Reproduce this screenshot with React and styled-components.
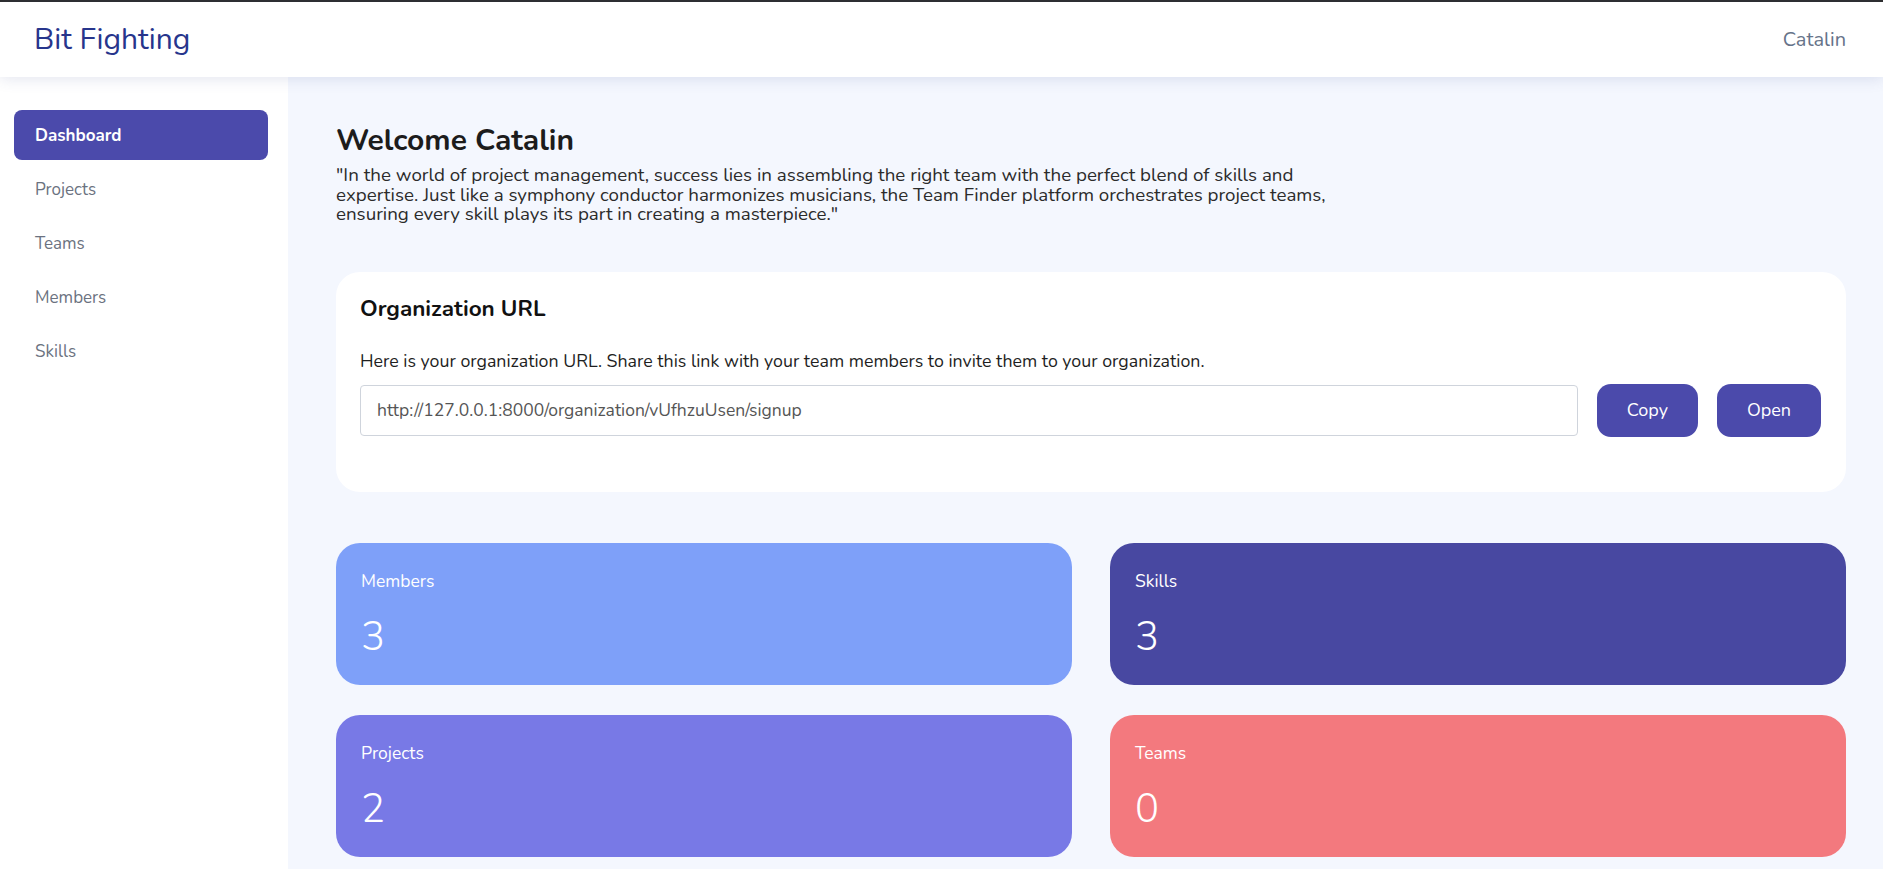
import React from "react";
import styled, { createGlobalStyle } from "styled-components";

const GlobalStyle = createGlobalStyle`
  html, body {
    margin: 0;
    padding: 0;
    background-color: #f4f7fe;
    font-family: "Nunito", "Lato", "Open Sans", sans-serif;
  }
  * {
    box-sizing: border-box;
  }
`;

const Page = styled.div`
  min-height: 869px;
  display: flex;
  flex-direction: column;
  border-top: 2px solid #2e2e2e;
`;

const TopBar = styled.header`
  height: 75px;
  display: flex;
  align-items: center;
  justify-content: space-between;
  padding: 0 37px 0 34px;
  background-color: #fff;
  box-shadow: 0 2px 14px rgba(60, 70, 140, 0.14);
  position: relative;
  z-index: 1;
`;

const Brand = styled.div`
  font-size: 30px;
  color: #27358c;
  font-weight: 400;
`;

const UserName = styled.div`
  font-size: 20px;
  color: #667389;
`;

const Body = styled.div`
  flex: 1;
  display: flex;
`;

const Sidebar = styled.nav`
  width: 288px;
  flex-shrink: 0;
  background-color: #fff;
  padding: 33px 20px 0 14px;
  display: flex;
  flex-direction: column;
  gap: 4px;
`;

const NavItem = styled.div`
  height: 50px;
  display: flex;
  align-items: center;
  padding-left: 21px;
  border-radius: 8px;
  font-size: 17px;
  font-weight: ${(p) => (p.active ? 700 : 400)};
  color: ${(p) => (p.active ? "#fff" : "#6b7280")};
  background-color: ${(p) => (p.active ? "#4b4aab" : "transparent")};
`;

const Main = styled.main`
  flex: 1;
  padding: 46px 37px 14px 48px;
`;

const Title = styled.h1`
  margin: 0 0 7px;
  font-size: 30px;
  line-height: 36px;
  font-weight: 700;
  color: #1c1c1c;
`;

const Quote = styled.p`
  margin: 0;
  max-width: 1010px;
  font-size: 18.75px;
  line-height: 19.6px;
  color: #2b2b2b;
`;

const UrlCard = styled.section`
  margin-top: 47px;
  background-color: #fff;
  border-radius: 24px;
  padding: 23px 25px 55px 24px;
`;

const CardTitle = styled.h2`
  margin: 0;
  font-size: 22.5px;
  line-height: 27px;
  font-weight: 700;
  color: #111;
`;

const CardText = styled.p`
  margin: 27px 0 11px;
  font-size: 17.8px;
  line-height: 24px;
  color: #1f1f1f;
`;

const UrlRow = styled.div`
  display: flex;
  align-items: center;
  gap: 19px;
`;

const UrlInput = styled.input`
  flex: 1;
  height: 51px;
  border: 1px solid #cfd4dc;
  border-radius: 4px;
  padding: 0 16px;
  font-family: inherit;
  font-size: 17.5px;
  color: #555;
  background-color: #fff;
  outline: none;
`;

const ActionButton = styled.button`
  height: 53px;
  padding: 0 30px;
  border: none;
  border-radius: 14px;
  background-color: #4b4aab;
  color: #fff;
  font-family: inherit;
  font-size: 18px;
  cursor: pointer;
`;

const StatsGrid = styled.div`
  margin-top: 51px;
  display: grid;
  grid-template-columns: 1fr 1fr;
  column-gap: 38px;
  row-gap: 30px;
`;

const StatCard = styled.div`
  height: 142px;
  border-radius: 24px;
  padding: 26px 25px;
  background-color: ${(p) => p.color};
  color: #fff;
`;

const StatLabel = styled.div`
  font-size: 17.5px;
  line-height: 24px;
`;

const StatValue = styled.div`
  margin-top: 20px;
  font-size: 40px;
  line-height: 48px;
  font-weight: 300;
`;

const navItems = ["Dashboard", "Projects", "Teams", "Members", "Skills"];

const stats = [
  { label: "Members", value: 3, color: "#7ea0f9" },
  { label: "Skills", value: 3, color: "#4848a1" },
  { label: "Projects", value: 2, color: "#7879e6" },
  { label: "Teams", value: 0, color: "#f3797e" },
];

const App = () => {
  return (
    <>
      <GlobalStyle />
      <Page>
        <TopBar>
          <Brand>Bit Fighting</Brand>
          <UserName>Catalin</UserName>
        </TopBar>
        <Body>
          <Sidebar>
            {navItems.map((item) => (
              <NavItem key={item} active={item === "Dashboard"}>
                {item}
              </NavItem>
            ))}
          </Sidebar>
          <Main>
            <Title>Welcome Catalin</Title>
            <Quote>
              "In the world of project management, success lies in assembling the right team with the
              perfect blend of skills and expertise. Just like a symphony conductor harmonizes
              musicians, the Team Finder platform orchestrates project teams, ensuring every skill
              plays its part in creating a masterpiece."
            </Quote>
            <UrlCard>
              <CardTitle>Organization URL</CardTitle>
              <CardText>
                Here is your organization URL. Share this link with your team members to invite them
                to your organization.
              </CardText>
              <UrlRow>
                <UrlInput readOnly value="http://127.0.0.1:8000/organization/vUfhzuUsen/signup" />
                <ActionButton>Copy</ActionButton>
                <ActionButton>Open</ActionButton>
              </UrlRow>
            </UrlCard>
            <StatsGrid>
              {stats.map((s) => (
                <StatCard key={s.label} color={s.color}>
                  <StatLabel>{s.label}</StatLabel>
                  <StatValue>{s.value}</StatValue>
                </StatCard>
              ))}
            </StatsGrid>
          </Main>
        </Body>
      </Page>
    </>
  );
};

export default App;
